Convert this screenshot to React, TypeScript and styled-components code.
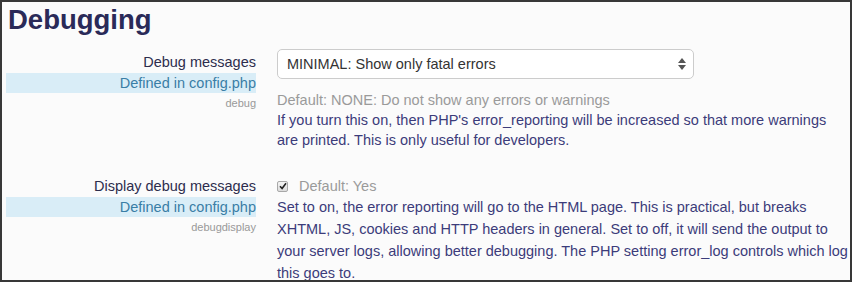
import React from 'react';
import styled, { createGlobalStyle } from 'styled-components';

const GlobalStyle = createGlobalStyle`
  body {
    margin: 0;
    background: #ffffff;
    font-family: "Liberation Sans", Arial, sans-serif;
  }
`;

const Frame = styled.div`
  width: 852px;
  height: 282px;
  box-sizing: border-box;
  border: 2px solid #383838;
  background-color: #fbfbfb;
  padding: 0 0 0 4px;
  overflow: hidden;
`;

const Heading = styled.h2`
  margin: 2px 0 0 2px;
  font-size: 27.5px;
  line-height: 32px;
  font-weight: 700;
  color: #2a2a58;
`;

const Setting = styled.div<{ $gap: number }>`
  display: grid;
  grid-template-columns: 250px 1fr;
  column-gap: 21px;
  margin-top: ${props => props.$gap}px;
`;

const LabelCol = styled.div`
  display: flex;
  flex-direction: column;
  text-align: right;
`;

const Label = styled.div<{ $top: number }>`
  font-size: 14.5px;
  line-height: 20px;
  color: #2d2d4d;
  padding-top: ${props => props.$top}px;
`;

const Defined = styled.div`
  margin-top: 1px;
  background-color: #d9edf7;
  color: #3a7ea6;
  font-size: 14.5px;
  line-height: 20px;
`;

const SettingName = styled.div`
  font-size: 11px;
  line-height: 16px;
  margin-top: 2px;
  color: #999999;
`;

const ContentCol = styled.div`
  display: flex;
  flex-direction: column;
`;

const SelectWrap = styled.div`
  position: relative;
  width: 417px;
`;

const Select = styled.select`
  appearance: none;
  width: 100%;
  height: 30px;
  box-sizing: border-box;
  border: 1px solid #cccccc;
  border-radius: 5px;
  background-color: #ffffff;
  padding: 0 24px 0 9px;
  font-family: "Liberation Sans", Arial, sans-serif;
  font-size: 14.5px;
  color: #333333;
`;

const Arrows = styled.svg`
  position: absolute;
  right: 8px;
  top: 9px;
  pointer-events: none;
`;

const DefaultText = styled.div<{ $top: number }>`
  font-size: 14.5px;
  line-height: 20px;
  color: #9a9a9a;
  margin-top: ${props => props.$top}px;
`;

const Description = styled.div<{ $lh: number }>`
  font-size: 14.5px;
  line-height: ${props => props.$lh}px;
  color: #3c3c7a;
`;

const CheckRow = styled.div`
  display: flex;
  align-items: center;
  gap: 11px;
  height: 20px;
`;

const CheckBox = styled.span`
  display: inline-flex;
  align-items: center;
  justify-content: center;
  width: 11px;
  height: 11px;
  box-sizing: border-box;
  border: 1px solid #a8a8a8;
  border-radius: 2px;
  background: linear-gradient(#f4f4f4, #dcdcdc);
`;

const App: React.FC = () => {
  return (
    <Frame>
      <GlobalStyle />
      <Heading>Debugging</Heading>

      <Setting $gap={13}>
        <LabelCol>
          <Label $top={3}>Debug messages</Label>
          <Defined>Defined in config.php</Defined>
          <SettingName>debug</SettingName>
        </LabelCol>
        <ContentCol>
          <SelectWrap>
            <Select defaultValue="minimal">
              <option value="minimal">MINIMAL: Show only fatal errors</option>
            </Select>
            <Arrows width="8" height="12" viewBox="0 0 8 12">
              <path d="M4 0 L8 5 L0 5 Z" fill="#555" />
              <path d="M0 7 L8 7 L4 12 Z" fill="#555" />
            </Arrows>
          </SelectWrap>
          <DefaultText $top={11}>Default: NONE: Do not show any errors or warnings</DefaultText>
          <Description $lh={20}>
            If you turn this on, then PHP's error_reporting will be increased so that more warnings
            are printed. This is only useful for developers.
          </Description>
        </ContentCol>
      </Setting>

      <Setting $gap={26}>
        <LabelCol>
          <Label $top={0}>Display debug messages</Label>
          <Defined>Defined in config.php</Defined>
          <SettingName>debugdisplay</SettingName>
        </LabelCol>
        <ContentCol>
          <CheckRow>
            <CheckBox>
              <svg width="8" height="8" viewBox="0 0 8 8">
                <path d="M1 4.2 L3.1 6.5 L7 1.2" fill="none" stroke="#222" strokeWidth="1.6" />
              </svg>
            </CheckBox>
            <DefaultText $top={0}>Default: Yes</DefaultText>
          </CheckRow>
          <Description $lh={22}>
            Set to on, the error reporting will go to the HTML page. This is practical, but breaks
            XHTML, JS, cookies and HTTP headers in general. Set to off, it will send the output to
            your server logs, allowing better debugging. The PHP setting error_log controls which log
            this goes to.
          </Description>
        </ContentCol>
      </Setting>
    </Frame>
  );
};

export default App;
